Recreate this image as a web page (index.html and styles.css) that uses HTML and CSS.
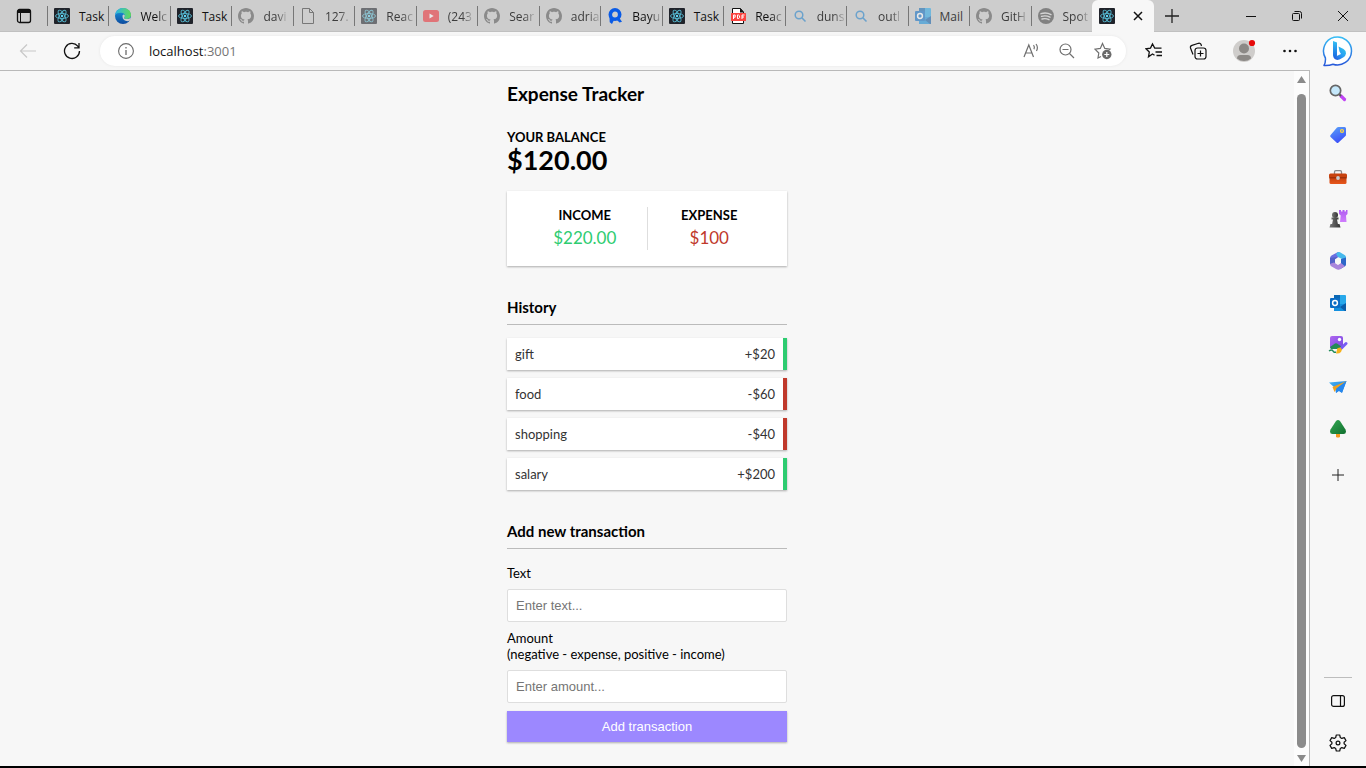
FILE: index.html
```html
<!DOCTYPE html>
<html lang="en">
<head>
<meta charset="utf-8">
<title>Expense Tracker</title>
<link rel="stylesheet" href="styles.css">
</head>
<body>
<svg class="sprite" aria-hidden="true">
  <defs>
    <linearGradient id="edgeBlue" x1="0" y1="0" x2="0" y2="1"><stop offset="0" stop-color="#1b9de2"/><stop offset="1" stop-color="#0c4a9e"/></linearGradient>
    <linearGradient id="edgeGreen" x1="0" y1="0" x2="1" y2="0"><stop offset="0" stop-color="#2bb5e8"/><stop offset="1" stop-color="#63d957"/></linearGradient>
    <linearGradient id="bingStroke" x1="0" y1="0" x2="0" y2="1"><stop offset="0" stop-color="#37bdf5"/><stop offset="1" stop-color="#2758d9"/></linearGradient>
    <linearGradient id="bingStem" x1="0" y1="0" x2="0" y2="1"><stop offset="0" stop-color="#35c0f3"/><stop offset="1" stop-color="#1660e0"/></linearGradient>
    <linearGradient id="bingFill" x1="1" y1="0" x2="0" y2="1"><stop offset="0" stop-color="#2ec9e6"/><stop offset=".5" stop-color="#2a9df4"/><stop offset="1" stop-color="#2450d8"/></linearGradient>
    <linearGradient id="tagFill" x1="0" y1="0" x2=".4" y2="1"><stop offset="0" stop-color="#5aa2f8"/><stop offset="1" stop-color="#3d53f8"/></linearGradient>
    <linearGradient id="pawnFill" x1="0" y1="0" x2="1" y2="0"><stop offset="0" stop-color="#777"/><stop offset="1" stop-color="#333"/></linearGradient>
    <linearGradient id="rookFill" x1="0" y1="0" x2="0" y2="1"><stop offset="0" stop-color="#b05cf2"/><stop offset="1" stop-color="#cf7dfc"/></linearGradient>
    <linearGradient id="treeFill" x1="0" y1="0" x2="1" y2="1"><stop offset="0" stop-color="#33a853"/><stop offset="1" stop-color="#11702f"/></linearGradient>
    <linearGradient id="boxFill" x1="0" y1="0" x2="0" y2="1"><stop offset="0" stop-color="#c8430f"/><stop offset="1" stop-color="#e8571c"/></linearGradient>
    <linearGradient id="planeFill" x1="0" y1="0" x2="1" y2="1"><stop offset="0" stop-color="#45b4f5"/><stop offset="1" stop-color="#1a73d8"/></linearGradient>
    <linearGradient id="pictureFill" x1="0" y1="0" x2="1" y2="1"><stop offset="0" stop-color="#b267f0"/><stop offset="1" stop-color="#7148e0"/></linearGradient>
  </defs>
  <symbol id="react" viewBox="0 0 16 16">
    <rect width="16" height="16" rx="1" fill="#20232a"/>
    <g fill="none" stroke="#56b9d1" stroke-width=".9">
      <ellipse cx="8" cy="8" rx="6.5" ry="2.5"/>
      <ellipse cx="8" cy="8" rx="6.5" ry="2.5" transform="rotate(60 8 8)"/>
      <ellipse cx="8" cy="8" rx="6.5" ry="2.5" transform="rotate(120 8 8)"/>
    </g>
    <circle cx="8" cy="8" r="1.2" fill="#61dafb"/>
  </symbol>
  <symbol id="github" viewBox="0 0 16 16">
    <path fill="#555" d="M8 0C3.58 0 0 3.58 0 8c0 3.54 2.29 6.53 5.47 7.59.4.07.55-.17.55-.38 0-.19-.01-.82-.01-1.49-2.01.37-2.53-.49-2.69-.94-.09-.23-.48-.94-.82-1.13-.28-.15-.68-.52-.01-.53.63-.01 1.08.58 1.23.82.72 1.21 1.87.87 2.33.66.07-.52.28-.87.51-1.07-1.78-.2-3.64-.89-3.64-3.95 0-.87.31-1.59.82-2.15-.08-.2-.36-1.02.08-2.12 0 0 .67-.21 2.2.82.64-.18 1.32-.27 2-.27s1.36.09 2 .27c1.53-1.04 2.2-.82 2.2-.82.44 1.1.16 1.92.08 2.12.51.56.82 1.27.82 2.15 0 3.07-1.87 3.75-3.65 3.95.29.25.54.73.54 1.48 0 1.07-.01 1.93-.01 2.2 0 .21.15.46.55.38A8.01 8.01 0 0 0 16 8c0-4.42-3.58-8-8-8z"/>
  </symbol>
  <symbol id="edge" viewBox="0 0 16 16">
    <circle cx="8" cy="8" r="8" fill="url(#edgeBlue)"/>
    <path d="M.2 7C.8 3 4 0 8 0c4.600 0 8 3.200 8 7 0 2.600-2 4-4.200 4-1.900 0-2.800-.8-2.800-1.300 0-.5.800-.8.800-2C9.800 6 8.200 4.700 6 4.700 3.300 4.700 1 5.600.2 7z" fill="url(#edgeGreen)"/>
    <path d="M7.500 8.500c0-1 .2-1.500.8-2 1 .2 1.500.6 1.500 1.400 0 1-.8 1.200-.8 1.800 0 .7 1 1.300 3 1.300 1.500 0 2.800-.6 3.500-1.600q.8 1.600-.8 3.200c-1 .6-2.200.7-3.200.5-2.400-.4-4-2.200-4-4.600z" fill="#cdcdcd"/>
  </symbol>
  <symbol id="page" viewBox="0 0 16 16"><path d="M2.500.5h7l4 4v11h-11zM9.500.5v4h4" fill="none" stroke="#777"/></symbol>
  <symbol id="youtube" viewBox="0 0 16 16"><rect y="2" width="16" height="12" rx="2.500" fill="#f02d33"/><path d="M6.500 5.500 10.700 8l-4.200 2.500z" fill="#fff"/></symbol>
  <symbol id="bayu" viewBox="0 0 16 16"><circle cx="8" cy="6.500" r="4.700" fill="none" stroke="#0a5be6" stroke-width="3.600"/><path d="M2.500 9l.2 5.200L5 16l2-4zM8 10l4.500 4.500 2.500-.8-3-4.200z" fill="#0a5be6"/></symbol>
  <symbol id="pdf" viewBox="0 0 16 16"><path d="M2.500.5h8l3 3.500v11.500h-11z" fill="#fff" stroke="#111"/><path d="M10 0v4.500h4z" fill="#111"/><rect x="1" y="5" width="15" height="8" rx=".5" fill="#fb4440"/><path d="M3.500 11V7h1.700v2.200H3.500M7.500 7v3.500h1.200l.8-.8V7.800L8.700 7zM12 11V7h2.500M12 9h2" fill="none" stroke="#fff"/></symbol>
  <symbol id="lens" viewBox="0 0 16 16"><circle cx="7" cy="7" r="3.800" fill="none" stroke="#1c7fcc" stroke-width="1.500"/><path d="m9.800 9.800 3.700 3.700" stroke="#1c7fcc" stroke-width="1.600"/></symbol>
  <symbol id="outlook" viewBox="0 0 16 16"><rect x="4" width="12" height="15" rx="1" fill="#28a8ea"/><path d="M4 0h6v7H4z" fill="#0b68b4"/><path d="M4 9h12v6a1 1 0 0 1-1 1H4z" fill="#1490df"/><path d="m16 8-6 4 5 4h1z" fill="#0c5ca8"/><rect y="3" width="10" height="10" rx="1" fill="#0a6cc4"/><circle cx="5" cy="8" r="2.400" fill="none" stroke="#fff" stroke-width="1.500"/></symbol>
  <symbol id="spotify" viewBox="0 0 16 16"><circle cx="8" cy="8" r="8" fill="#444"/><path d="M3 5.700q5.500-1.600 10 .9M3.500 8.400q4.500-1.300 8.500.8M4 11q3.800-1 7 .7" fill="none" stroke="#ddd" stroke-width="1.400" stroke-linecap="round"/></symbol>
</svg>

<header class="tab-strip">
  <button class="tab-menu" aria-label="Tab actions"><svg width="16" height="16" viewBox="0 0 16 16"><rect x="1.500" y="1.500" width="13" height="13" rx="2" fill="none" stroke="#111" stroke-width="1.300"/><path d="M1.500 5V3.500a2 2 0 0 1 2-2h9a2 2 0 0 1 2 2V5z" fill="#111"/><path d="M4.500 5v9" stroke="#111"/></svg></button>
  <nav class="tabs" aria-label="Open tabs">
    <button class="tab"><svg class="favicon"><use href="#react"/></svg><span class="tab-label">Task</span></button>
    <button class="tab"><svg class="favicon"><use href="#edge"/></svg><span class="tab-label fade">Welc</span></button>
    <button class="tab"><svg class="favicon"><use href="#react"/></svg><span class="tab-label">Task</span></button>
    <button class="tab asleep"><svg class="favicon"><use href="#github"/></svg><span class="tab-label fade">davi</span></button>
    <button class="tab asleep"><svg class="favicon strong"><use href="#page"/></svg><span class="tab-label fade">127.</span></button>
    <button class="tab asleep"><svg class="favicon"><use href="#react"/></svg><span class="tab-label fade">Reac</span></button>
    <button class="tab asleep"><svg class="favicon"><use href="#youtube"/></svg><span class="tab-label fade">(243</span></button>
    <button class="tab asleep"><svg class="favicon"><use href="#github"/></svg><span class="tab-label fade">Sear</span></button>
    <button class="tab asleep"><svg class="favicon"><use href="#github"/></svg><span class="tab-label fade">adria</span></button>
    <button class="tab"><svg class="favicon"><use href="#bayu"/></svg><span class="tab-label fade">Bayu</span></button>
    <button class="tab"><svg class="favicon"><use href="#react"/></svg><span class="tab-label">Task</span></button>
    <button class="tab"><svg class="favicon"><use href="#pdf"/></svg><span class="tab-label fade">Reac</span></button>
    <button class="tab asleep"><svg class="favicon"><use href="#lens"/></svg><span class="tab-label fade">duns</span></button>
    <button class="tab asleep"><svg class="favicon"><use href="#lens"/></svg><span class="tab-label fade">outl</span></button>
    <button class="tab asleep"><svg class="favicon"><use href="#outlook"/></svg><span class="tab-label">Mail</span></button>
    <button class="tab asleep"><svg class="favicon"><use href="#github"/></svg><span class="tab-label fade">GitH</span></button>
    <button class="tab asleep"><svg class="favicon"><use href="#spotify"/></svg><span class="tab-label fade">Spot</span></button>
  </nav>
  <div class="tab-active"><svg class="favicon"><use href="#react"/></svg><button class="tab-close" aria-label="Close tab"><svg width="10" height="10" viewBox="0 0 10 10"><path d="m1 1 8 8M9 1 1 9" stroke="#111" stroke-width="1.500"/></svg></button></div>
  <button class="new-tab" aria-label="New tab"><svg width="14" height="14" viewBox="0 0 14 14"><path d="M7 0v14M0 7h14" stroke="#222" stroke-width="1.300"/></svg></button>
  <div class="window-controls">
    <button aria-label="Minimize"><svg width="10" height="10" viewBox="0 0 10 10"><path d="M0 5.500h10" stroke="#111"/></svg></button>
    <button aria-label="Restore"><svg width="10" height="10" viewBox="0 0 10 10" fill="none" stroke="#111"><rect x=".5" y="2.500" width="7" height="7" rx="1"/><path d="M2.500.5H7.500a2 2 0 0 1 2 2v5"/></svg></button>
    <button aria-label="Close"><svg width="10" height="10" viewBox="0 0 10 10"><path d="m0 0 10 10M10 0 0 10" stroke="#111"/></svg></button>
  </div>
</header>

<div class="toolbar">
  <button class="tool" aria-label="Back"><svg width="18" height="16" viewBox="0 0 18 16"><path d="M17 8H2M8 1.500 1.500 8 8 14.500" fill="none" stroke="#c8c8c8" stroke-width="1.200"/></svg></button>
  <button class="tool" aria-label="Refresh"><svg width="18" height="18" viewBox="0 0 18 18"><path d="M16.500 9A7.500 7.500 0 1 1 14.800 4.200L16 5.500M16 1v4.800h-4.800" fill="none" stroke="#111" stroke-width="1.300"/></svg></button>
  <div class="address">
    <svg width="16" height="16" viewBox="0 0 16 16" fill="none" stroke="#6b6b6b"><circle cx="8" cy="8" r="7.400" stroke-width="1.100"/><path d="M8 7v5M8 4v1.500" stroke-width="1.300"/></svg>
    <div class="url" role="textbox" aria-label="Address" contenteditable="true" spellcheck="false">localhost<span class="port">:3001</span></div>
    <button aria-label="Read aloud"><svg width="17" height="16" viewBox="0 0 17 16" fill="none" stroke="#6f6f6f" stroke-width="1.200"><path d="M1 14 5.800 2 10.500 14M2.700 10h6.200M10.500 2.200q1.500 1.800.5 4M13 1q2.500 3.200.5 7"/></svg></button>
    <button aria-label="Zoom out"><svg width="16" height="16" viewBox="0 0 16 16" fill="none" stroke="#6f6f6f" stroke-width="1.200"><circle cx="6.500" cy="6.500" r="5.500"/><path d="M3.500 6.500h6M10.500 10.500l4.500 4.500"/></svg></button>
    <button aria-label="Add to favorites"><svg width="18" height="18" viewBox="0 0 18 18"><path d="M7 14.500 4 16l.8-5L1 7.200l5.300-.8L8.500 1.500l2.300 4.900 5.200.8-1 1" fill="none" stroke="#6f6f6f" stroke-width="1.200"/><circle cx="12.800" cy="12.500" r="4.700" fill="#6b6b6b"/><path d="M12.800 10v5M10.300 12.500h5" stroke="#fff" stroke-width="1.200"/></svg></button>
  </div>
  <button class="tool" aria-label="Favorites"><svg width="18" height="18" viewBox="0 0 18 18" fill="none" stroke="#111" stroke-width="1.300"><path d="M9.500 13.200 7.500 12 3.500 14.800l.8-4.800L1 6.800l4.500-.7L7.500 2l2.200 4.100H16.500M10.500 10h6.500M11.500 13.500H17"/></svg></button>
  <button class="tool" aria-label="Collections"><svg width="18" height="18" viewBox="0 0 18 18" fill="none" stroke="#111" stroke-width="1.200"><rect x="6" y="6" width="11" height="11" rx="2.500"/><path d="M11.500 8.500v6M8.500 11.500h6M4 12.500 1.500 6A2.200 2.200 0 0 1 3 3.300l6.500-2A2.200 2.200 0 0 1 12.200 3l.3 1"/></svg></button>
  <button class="tool profile" aria-label="Profile"><svg width="24" height="24" viewBox="0 0 24 24"><circle cx="12" cy="12" r="11" fill="#cfcdcb"/><circle cx="12" cy="9.500" r="5" fill="#8c8986"/><path d="M5 19.500q0-3.500 3.500-3.500h7q3.500 0 3.500 3.500a11 11 0 0 1-14 0z" fill="#8c8986"/><circle cx="20" cy="4" r="3.100" fill="#e60a0a"/></svg></button>
  <button class="tool" aria-label="Settings and more"><svg width="16" height="4" viewBox="0 0 16 4" fill="#111"><circle cx="2.500" cy="2" r="1.300"/><circle cx="8" cy="2" r="1.300"/><circle cx="13.500" cy="2" r="1.300"/></svg></button>
  <button class="tool bing" aria-label="Bing"><svg width="32" height="32" viewBox="0 0 32 32"><path d="M2 30.500q1.800-3 1.400-7.500A14 14 0 1 1 11 29.200Q7 30.800 2 30.500z" fill="#fff" stroke="url(#bingStroke)" stroke-width="1.500" stroke-linejoin="round"/><path d="m11 6 4 1.500v11l-.2 5.500q-3.800-.5-3.800-4z" fill="url(#bingStem)"/><path d="m16.500 11.500 5 2.500q2.800 1.700 2.500 4.500-.4 2.500-2.500 3.700l-4 2.300q-4 1.500-6-2l7.500-3.500-1.500-2.500z" fill="url(#bingFill)"/></svg></button>
</div>

<div class="window-body">
  <div class="viewport">
    <main class="page">
      <div class="tracker">
        <h2 class="title">Expense Tracker</h2>
        <h4 class="caption">Your Balance</h4>
        <h1 class="balance">$120.00</h1>
        <section class="summary">
          <div class="summary-cell"><h4 class="caption">Income</h4><p class="money plus">$220.00</p></div>
          <div class="summary-cell"><h4 class="caption">Expense</h4><p class="money minus">$100</p></div>
        </section>
        <h3 class="section-title">History</h3>
        <ul class="history">
          <li class="entry entry-plus"><span>gift</span><span>+$20</span></li>
          <li class="entry entry-minus"><span>food</span><span>-$60</span></li>
          <li class="entry entry-minus"><span>shopping</span><span>-$40</span></li>
          <li class="entry entry-plus"><span>salary</span><span>+$200</span></li>
        </ul>
        <h3 class="section-title">Add new transaction</h3>
        <form class="form">
          <label for="text">Text</label>
          <input id="text" type="text" placeholder="Enter text...">
          <label for="amount">Amount<br>(negative - expense, positive - income)</label>
          <input id="amount" type="text" placeholder="Enter amount...">
          <button class="submit" type="button">Add transaction</button>
        </form>
      </div>
    </main>
    <div class="scrollbar" aria-hidden="true">
      <svg width="9" height="7" viewBox="0 0 9 7"><path d="M4.500 0 9 7H0z" fill="#8a8a8a"/></svg>
      <div class="thumb"></div>
      <svg width="9" height="7" viewBox="0 0 9 7"><path d="M4.500 7 9 0H0z" fill="#8a8a8a"/></svg>
    </div>
  </div>
  <aside class="sidebar">
    <button aria-label="Search"><svg width="18" height="18" viewBox="0 0 18 18"><path d="m12 12 3.500 3.500" stroke="#c043f5" stroke-width="3.200" stroke-linecap="round"/><path d="m10 10 2 2" stroke="#555" stroke-width="2"/><circle cx="6.500" cy="6.500" r="5.200" fill="#c5e8fb" stroke="#666" stroke-width="1.700"/></svg></button>
    <button aria-label="Shopping"><svg width="18" height="18" viewBox="0 0 18 18"><path d="M8 1.500Q8.500 1 9.500 1H15.500q1.500 0 1.500 1.500V8.500q0 1-.5 1.500L9.500 16.400q-1 1-2 0L1.600 11q-1-1 0-2z" fill="url(#tagFill)"/><circle cx="13" cy="5" r="1.500" fill="#8090c0" stroke="#ffd93b" stroke-width="1.200"/></svg></button>
    <button aria-label="Tools"><svg width="18" height="18" viewBox="0 0 18 18"><path d="M5.500 6V4q0-1.300 1.300-1.300h4.400q1.300 0 1.300 1.300v2" fill="none" stroke="#888" stroke-width="1.300"/><rect y="5.500" width="18" height="5" rx="1.500" fill="#c8430f"/><path d="M.5 10h17v4.500q0 1.500-1.500 1.500H2Q.5 16 .5 14.500z" fill="url(#boxFill)"/><path d="M.5 9.800h17" stroke="#8d2b0b"/><circle cx="9" cy="10" r="1.900" fill="#c9ccd0"/></svg></button>
    <button aria-label="Games"><svg width="20" height="20" viewBox="0 0 20 20"><path d="M11 1h2v1.500h1.500V1h2v1.500H18V1h1.500v4L18 6.500l.5 6.500H12l.7-6.500L11 5z" fill="url(#rookFill)"/><circle cx="7" cy="6" r="3" fill="url(#pawnFill)"/><path d="M3.500 8.500h7v2H9l1 5H4l1-5H3.500zM2.500 15h9l1 3.500h-11z" fill="url(#pawnFill)"/></svg></button>
    <button aria-label="Microsoft 365"><svg width="18" height="18" viewBox="0 0 18 18"><path d="M9 0 2.500 3.500Q1 4.500 1 6v6l5.500-1V7l5-3z" fill="#6a6fe0"/><path d="M9 0q1-.3 2 .3l5 3Q17 4 17 5.500V10l-4-3-4-2-2-3z" fill="#46b9ec"/><path d="M17 5.500v7q0 1-1 1.700l-5 3 1-4.200V7z" fill="#2c66c8"/><path d="M1 6v6l6-1 1-6z" fill="#5361c8"/><path d="M1 12q0 1.500 1.200 2.200L7 17q2 1.300 4 .2l5-3-4-3.200-3 2-4-2.500z" fill="#a985dc"/><path d="m9 5.500 3 1.800v3.500l-3 1.800-3-1.800V7.300z" fill="#f7f7f7"/></svg></button>
    <button aria-label="Outlook"><svg width="16" height="16"><use href="#outlook"/></svg></button>
    <button aria-label="Image creator"><svg width="20" height="20" viewBox="0 0 20 20"><rect x="2" y="1" width="13" height="13" rx="2" fill="url(#pictureFill)"/><path d="m2 12 5-3.500q1-.7 2 0l5 3.500-3 2H3z" fill="#228b55"/><circle cx="11.500" cy="4.500" r="1.700" fill="#fff"/><path d="M1 16q3-2 4 0 1 2 3 1" fill="none" stroke="#208b5a" stroke-width="1.500"/><path d="m13 13.500 5-5" stroke="#775cf4" stroke-width="3" stroke-linecap="round"/><path d="m9.500 13 3-.5 1.500 2-1 2.500q-2 2-5 1.500z" fill="#f6b31c"/></svg></button>
    <button aria-label="Drop"><svg width="18" height="18" viewBox="0 0 18 18"><path d="M0 4.500 17.500 3 13 15l-3-2-3 2-1-5z" fill="url(#planeFill)"/><path d="M17.500 3 3.500 9l2 5 2-3.500z" fill="#f0a11e"/><path d="m17.500 3-10 7.500L7 15l2.500-2.500 3.500 2z" fill="#2687ee"/></svg></button>
    <button aria-label="Tree"><svg width="18" height="18" viewBox="0 0 18 18"><path d="M7 13h4v4q-2 1-4 0z" fill="#f29a1f"/><path d="M7 1q2-2 4 0l5.500 8.500q1.500 4.500-2 4.500h-11q-3.500 0-2-4.500z" fill="url(#treeFill)"/></svg></button>
    <button class="add-app" aria-label="Add app"><svg width="12" height="12" viewBox="0 0 12 12"><path d="M6 0v12M0 6h12" stroke="#222"/></svg></button>
    <hr>
    <button aria-label="Hide sidebar"><svg width="14" height="12" viewBox="0 0 14 12" fill="none" stroke="#111" stroke-width="1.200"><rect x=".6" y=".6" width="12.800" height="10.800" rx="2"/><path d="M9.500.5v11"/></svg></button>
    <button aria-label="Settings"><svg width="18" height="18" viewBox="0 0 18 18" fill="none" stroke="#111" stroke-width="1.200" stroke-linejoin="round"><path d="m7.300 1-.6 2.500-1.500.9L2.700 3.600 1 6.600 2.900 8.300v1.400L1 11.400l1.700 3 2.500-.8 1.500.9.600 2.500h3.400l.6-2.500 1.500-.9 2.500.8 1.700-3-1.900-1.700V8.300L17 6.600l-1.700-3-2.500.8-1.500-.9L10.700 1z"/><circle cx="9" cy="9" r="1.900"/></svg></button>
  </aside>
</div>
</body>
</html>
```

FILE: styles.css
```css
* { box-sizing: border-box; }

body {
  margin: 0;
  height: 100vh;
  display: flex;
  flex-direction: column;
  background: #f7f7f7;
  border-bottom: 2px solid #000;
  font-family: "Open Sans", "Noto Sans", sans-serif;
  font-size: 12px;
  color: #111;
  overflow: hidden;
}

button {
  margin: 0;
  padding: 0;
  border: 0;
  background: none;
  font: inherit;
  color: inherit;
  display: flex;
  align-items: center;
  justify-content: center;
}

svg { flex: none; }
.sprite { position: absolute; width: 0; height: 0; }

/* Tab strip */
.tab-strip {
  flex: none;
  display: flex;
  height: 32px;
  background: #cdcdcd;
  box-shadow: inset 0 -1px #c0c0c0;
}
.tab-menu { width: 47px; }
.tabs { flex: 1; display: flex; min-width: 0; align-items: center; }
.tab {
  flex: 1 1 0;
  min-width: 0;
  height: 20px;
  padding-left: 6px;
  gap: 9px;
  border-left: 1px solid #777;
  justify-content: flex-start;
}
.favicon { width: 16px; height: 16px; }
.tab-label { white-space: nowrap; }
.fade { mask-image: linear-gradient(to right, #000 60%, rgba(0, 0, 0, .2)); }
.asleep { color: #3c3c3c; }
.asleep .favicon { opacity: .55; }
.asleep .strong { opacity: 1; }
.tab-active {
  width: 62px;
  padding: 0 11px 0 7px;
  display: flex;
  align-items: center;
  justify-content: space-between;
  background: #f7f7f7;
  border-radius: 6px 6px 0 0;
}
.new-tab { width: 36px; margin-right: 38px; }
.window-controls { display: flex; }
.window-controls button { width: 46px; }

/* Toolbar */
.toolbar {
  flex: none;
  display: flex;
  align-items: center;
  height: 38px;
  padding: 0 2px 0 6px;
}
.tool { width: 44px; height: 36px; }
.profile { width: 48px; }
.bing { width: 52px; }
.address {
  flex: 1;
  display: flex;
  align-items: center;
  height: 30px;
  margin: 0 6px;
  padding: 0 5px 0 18px;
  border-radius: 15px;
  background: #fff;
  box-shadow: 0 0 3px #e6e6e6;
}
.address button { width: 36px; height: 30px; }
.url { flex: 1; margin-left: 15px; font-size: 13px; outline: 0; }
.port { color: #757575; }

/* Window body */
.window-body { flex: 1; display: flex; min-height: 0; }
.viewport {
  flex: 1;
  display: flex;
  border-top: 1px solid #b9b9b9;
  border-right: 1px solid #b9b9b9;
}
.page { flex: 1; display: flex; justify-content: center; }
.scrollbar {
  width: 15px;
  display: flex;
  flex-direction: column;
  align-items: center;
  gap: 11px;
  padding: 5px 0 4px;
  background: #fcfcfc;
}
.thumb { flex: 1; width: 9px; margin-bottom: -4px; border-radius: 5px; background: #8b8b8b; }

/* Sidebar */
.sidebar {
  width: 56px;
  display: flex;
  flex-direction: column;
  align-items: center;
  padding: 2px 0;
}
.sidebar button { width: 100%; height: 42px; }
.sidebar .add-app { margin-top: 4px; }
.sidebar hr {
  width: 28px;
  margin: auto 0 2px;
  border: 0;
  border-top: 1px solid #bdbdbd;
}

/* Expense tracker */
.tracker {
  width: 280px;
  padding-top: 11px;
  font-family: Lato, sans-serif;
  font-size: 13px;
  line-height: 16px;
  color: #000;
}
.tracker h1, .tracker h2, .tracker h3, .tracker h4, .tracker p { margin: 0; }
.title { font-size: 19px; line-height: 24px; }
.caption { font-size: 13px; text-transform: uppercase; }
.tracker .title { margin-bottom: 23px; }
.tracker .balance { font-size: 27px; line-height: 30px; margin-bottom: 16px; }
.summary {
  display: flex;
  padding: 16px;
  background: #fff;
  box-shadow: 0 1px 2px rgba(0, 0, 0, .3);
}
.summary-cell { flex: 1; text-align: center; }
.summary-cell + .summary-cell { border-left: 1px solid #dedede; }
.tracker .money { margin-top: 2px; font-size: 17px; line-height: 25px; }
.plus { color: #2ecc71; }
.minus { color: #c0392b; }
.tracker .section-title {
  margin-top: 32px;
  padding-bottom: 8px;
  border-bottom: 1px solid #bbb;
  font-size: 15px;
  line-height: 18px;
}
.history {
  display: grid;
  gap: 8px;
  margin: 13px 0 0;
  padding: 0;
  list-style: none;
}
.entry {
  display: flex;
  justify-content: space-between;
  padding: 8px;
  background: #fff;
  border-right: 4px solid;
  box-shadow: 0 1px 2px rgba(0, 0, 0, .3);
  color: #333;
}
.entry-plus { border-color: #2ecc71; }
.entry-minus { border-color: #c0392b; }
.form { display: grid; gap: 8px; margin-top: 16px; }
.form input {
  width: 100%;
  height: 33px;
  padding: 8px;
  border: 1px solid #dedede;
  border-radius: 2px;
  background: #fff;
  font: 13px "Liberation Sans", Arial, sans-serif;
}
.form input::placeholder { color: #757575; }
.submit {
  height: 31px;
  background: #9c88ff;
  box-shadow: 0 1px 2px rgba(0, 0, 0, .3);
  color: #fff;
  font: 13px "Liberation Sans", Arial, sans-serif;
}
```
